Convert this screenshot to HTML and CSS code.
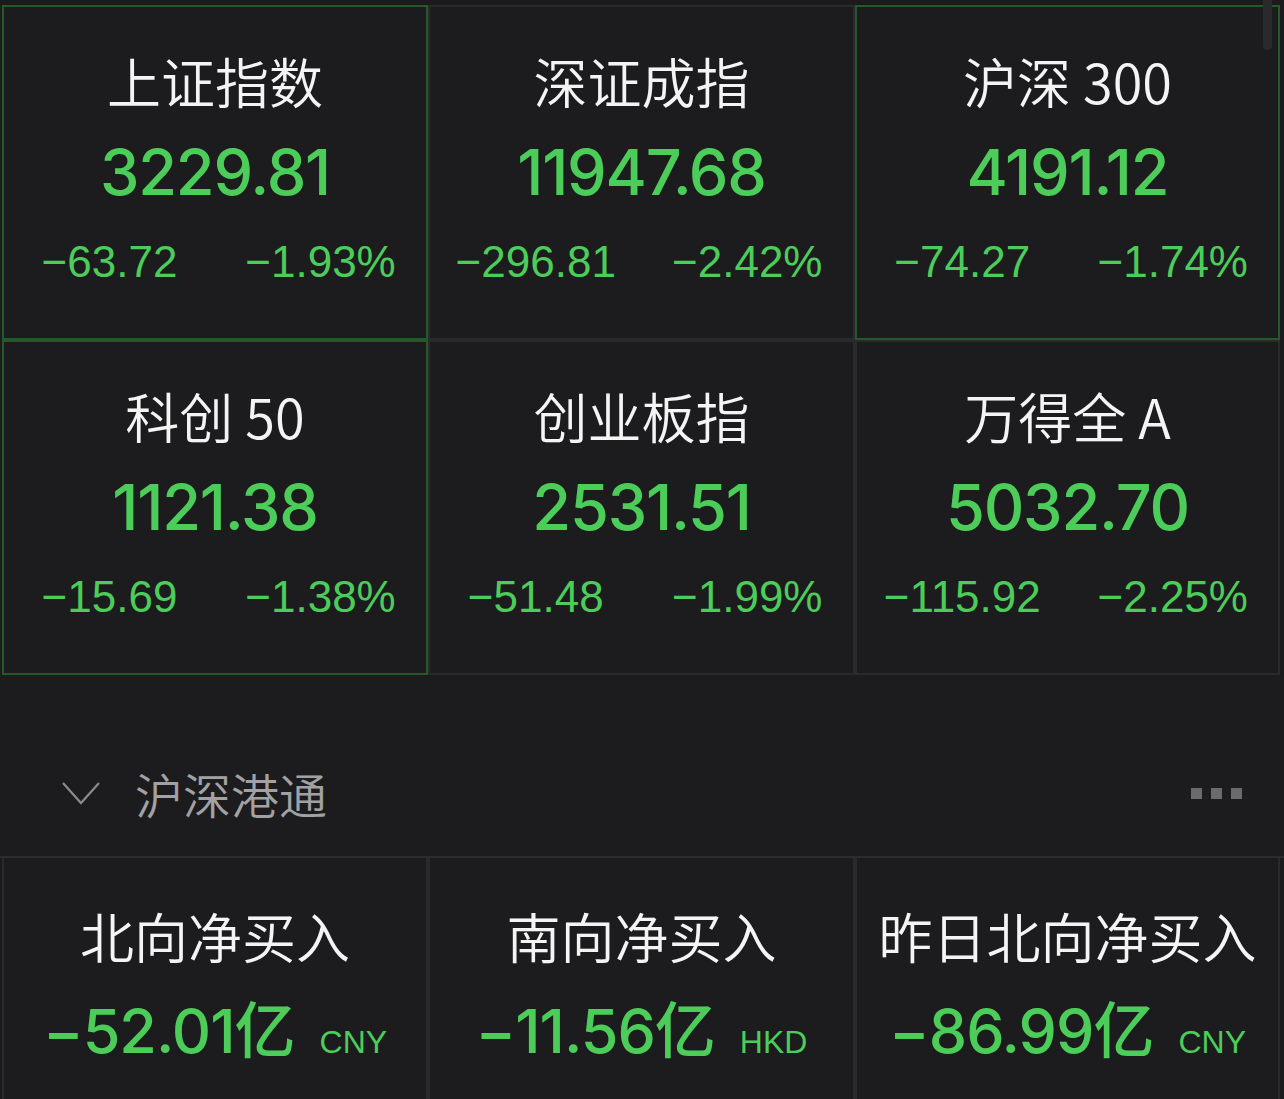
FILE: index.html
```html
<!DOCTYPE html>
<html lang="zh-CN">
<head>
<meta charset="utf-8">
<title>行情</title>
<link rel="stylesheet" href="styles.css">
</head>
<body>
<div class="page">
  <div class="grid indices">
    <div class="card hl">
      <div class="title">上证指数</div>
      <div class="price">3229.81</div>
      <div class="change"><span>−63.72</span><span>−1.93%</span></div>
    </div>
    <div class="card">
      <div class="title">深证成指</div>
      <div class="price">11947.68</div>
      <div class="change"><span>−296.81</span><span>−2.42%</span></div>
    </div>
    <div class="card hl">
      <div class="title">沪深 300</div>
      <div class="price">4191.12</div>
      <div class="change"><span>−74.27</span><span>−1.74%</span></div>
    </div>
    <div class="card hl">
      <div class="title">科创 50</div>
      <div class="price">1121.38</div>
      <div class="change"><span>−15.69</span><span>−1.38%</span></div>
    </div>
    <div class="card">
      <div class="title">创业板指</div>
      <div class="price">2531.51</div>
      <div class="change"><span>−51.48</span><span>−1.99%</span></div>
    </div>
    <div class="card">
      <div class="title">万得全 A</div>
      <div class="price">5032.70</div>
      <div class="change"><span>−115.92</span><span>−2.25%</span></div>
    </div>
  </div>

  <div class="section">
    <div class="sec-left">
      <svg class="chev" width="38" height="24" viewBox="0 0 38 24"><polyline points="1,2 19,22 37,2" fill="none" stroke="#8a8a8c" stroke-width="2.2"/></svg>
      <span class="sec-title">沪深港通</span>
    </div>
    <div class="dots"><i></i><i></i><i></i></div>
  </div>

  <div class="grid flows">
    <div class="card flow">
      <div class="title">北向净买入</div>
      <div class="amount"><span class="num">−52.01</span><span class="yi">亿</span><span class="cur">CNY</span></div>
    </div>
    <div class="card flow">
      <div class="title">南向净买入</div>
      <div class="amount"><span class="num">−11.56</span><span class="yi">亿</span><span class="cur">HKD</span></div>
    </div>
    <div class="card flow">
      <div class="title">昨日北向净买入</div>
      <div class="amount"><span class="num">−86.99</span><span class="yi">亿</span><span class="cur">CNY</span></div>
    </div>
  </div>

  <div class="scroll"></div>
</div>
</body>
</html>
```

FILE: styles.css
```css
html, body {
  margin: 0;
  padding: 0;
  background: #1b1b1d;
  overflow: hidden;
}
.page {
  position: relative;
  width: 1284px;
  height: 1099px;
  overflow: hidden;
  font-family: "Noto Sans CJK SC", "Noto Sans", sans-serif;
}
.grid {
  display: grid;
  grid-template-columns: 426px 427px 425px;
  padding-left: 2px;
}
.indices {
  padding-top: 5px;
  grid-auto-rows: 335px;
}
.card {
  box-sizing: border-box;
  border: 2px solid #2a2a2c;
  background: #1c1c1e;
  display: flex;
  flex-direction: column;
  align-items: center;
  padding-top: 42px;
}
.card.hl {
  border-color: #25592a;
}
.title {
  color: #f4f4f4;
  font-size: 54px;
  font-weight: 350;
  line-height: 64px;
  height: 64px;
  white-space: nowrap;
}
.price {
  margin-top: 22px;
  color: #4ccd5a;
  font-family: "Inter", "Liberation Sans", sans-serif;
  font-weight: 500;
  font-size: 63px;
  line-height: 74px;
  letter-spacing: -1.2px;
}
.change {
  margin-top: 28px;
  align-self: stretch;
  display: flex;
  color: #4ccd5a;
  font-family: "Liberation Sans", sans-serif;
  font-size: 44px;
  line-height: 50px;
}
.change span {
  flex: 1;
  text-align: center;
}
.section {
  box-sizing: border-box;
  height: 183px;
  border-bottom: 2px solid #2c2c2e;
  background: #1c1c1e;
  display: flex;
  align-items: flex-end;
  justify-content: space-between;
  padding: 0 42px 32px 62px;
}
.sec-left {
  display: flex;
  align-items: center;
  height: 62px;
  gap: 35px;
}
.chev {
  display: block;
}
.sec-title {
  color: #a2a2a4;
  font-size: 48px;
  font-weight: 350;
  line-height: 62px;
}
.dots {
  display: flex;
  align-items: center;
  height: 62px;
  gap: 9px;
}
.dots i {
  display: block;
  width: 11px;
  height: 11px;
  background: #6b6b6d;
}
.flows {
  grid-auto-rows: 260px;
}
.card.flow {
  border-top: none;
  padding-top: 46px;
}
.amount {
  margin-top: 24px;
  display: flex;
  align-items: baseline;
  color: #4ccd5a;
  white-space: nowrap;
}
.amount .num {
  font-family: "Inter", "Liberation Sans", sans-serif;
  font-weight: 500;
  font-size: 61px;
  line-height: 70px;
  letter-spacing: -1px;
}
.amount .yi {
  font-size: 61px;
  line-height: 70px;
  font-weight: 500;
}
.amount .cur {
  margin-left: 24px;
  font-family: "Liberation Sans", sans-serif;
  font-size: 32px;
}
.scroll {
  position: absolute;
  top: 0;
  right: 12px;
  width: 9px;
  height: 50px;
  border-radius: 0 0 4px 4px;
  background: #2a2a2c;
}
```
